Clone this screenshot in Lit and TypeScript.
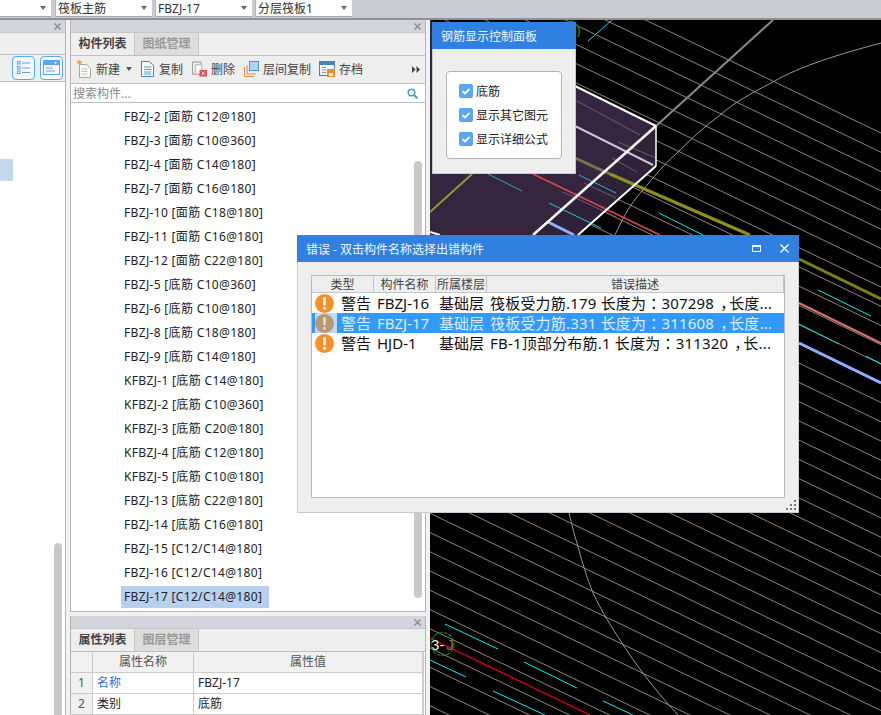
import { LitElement, html, css, svg } from "lit";
import { customElement } from "lit/decorators.js";

const rows = [
  "FBZJ-2 [面筋 C12@180]", "FBZJ-3 [面筋 C10@360]", "FBZJ-4 [面筋 C14@180]", "FBZJ-7 [面筋 C16@180]",
  "FBZJ-10 [面筋 C18@180]", "FBZJ-11 [面筋 C16@180]", "FBZJ-12 [面筋 C22@180]", "FBZJ-5 [底筋 C10@360]",
  "FBZJ-6 [底筋 C10@180]", "FBZJ-8 [底筋 C18@180]", "FBZJ-9 [底筋 C14@180]", "KFBZJ-1 [底筋 C14@180]",
  "KFBZJ-2 [底筋 C10@360]", "KFBZJ-3 [底筋 C20@180]", "KFBZJ-4 [底筋 C12@180]", "KFBZJ-5 [底筋 C10@180]",
  "FBZJ-13 [底筋 C22@180]", "FBZJ-14 [底筋 C16@180]", "FBZJ-15 [C12/C14@180]", "FBZJ-16 [C12/C14@180]",
  "FBZJ-17 [C12/C14@180]",
];

const errors = [
  { name: "FBZJ-16", desc: "筏板受力筋.179 长度为：307298，长度..." },
  { name: "FBZJ-17", desc: "筏板受力筋.331 长度为：311608，长度...", selected: true },
  { name: "HJD-1", desc: "FB-1顶部分布筋.1 长度为：311320，长..." },
];

// [x1, y1, x2, y2, colour, width]
const segments: [number, number, number, number, string, number][] = [
  [773, 20, 656, 126, "#8a8a8a", 2],
  [575, 126, 653, 165, "#c9bfd6", 2],
  [618, 142, 656, 158, "#6d5f70", 1],
  [612, 158, 637, 172, "#6d5f70", 1],
  [563, 192, 616, 217, "#6d5f70", 1],
  [584, 183, 616, 198, "#6d5f70", 1],
  [575, 100, 640, 135, "#6d5f70", 1],
  [575, 158, 610, 174, "#7d7450", 3],
  [610, 174, 750, 235, "#8f8f1a", 3],
  [799, 259, 881, 299, "#7f7f10", 3],
  [430, 212, 472, 174, "#9b9634", 2],
  [488, 174, 522, 191, "#2aa6b8", 1],
  [579, 175, 616, 193, "#1fb8c8", 1],
  [549, 203, 601, 228, "#1fc8d0", 1],
  [588, 41, 612, 20, "#16e0e0", 1],
  [659, 213, 703, 235, "#00f0f0", 1],
  [818, 290, 871, 316, "#00f0f0", 1],
  [799, 324, 839, 344, "#00e0e0", 1],
  [866, 356, 881, 364, "#00f0f0", 1],
  [445, 624, 498, 649, "#00f0f0", 1],
  [430, 660, 466, 677, "#00f0f0", 1],
  [524, 662, 577, 688, "#00f0f0", 1],
  [493, 691, 545, 715, "#00f0f0", 1],
  [603, 701, 633, 715, "#00f0f0", 1],
  [533, 174, 660, 235, "#d94848", 1.5],
  [799, 303, 881, 343, "#e07070", 2],
  [430, 638, 590, 715, "#e00000", 1.3],
  [548, 222, 574, 235, "#8fb4ff", 3],
  [799, 343, 881, 383, "#8ab0ff", 3],
  [575, 86, 656, 126, "#ffffff", 2],
  [656, 126, 656, 166, "#ffffff", 1.5],
  [656, 126, 533, 235, "#ffffff", 2.5],
  [656, 166, 578, 235, "#ffffff", 2],
  [430, 232, 440, 235, "#ffffff", 2],
];

function hatch() {
  const lines = [];
  for (let k = -30; k < 32; k++) {
    const y0 = 513.3 + (k - 1) * 19.25;
    lines.push(svg`<line x1="430" y1=${y0} x2="881" y2=${y0 + 0.48 * 451} stroke="#8f847a" stroke-width="1"></line>`);
  }
  return lines;
}

const closeIcon = html`<svg class="x" width="7" height="7" viewBox="0 0 7 7"><path d="M.5.5l6 6M6.500.5l-6 6" stroke="#8b8e94" stroke-width="1.500"/></svg>`;

const warnIcon = (selected?: boolean) => html`<svg class="warn" width="19" height="19" viewBox="0 0 19 19">
  <circle cx="9.500" cy="9.500" r="9.500" fill=${selected ? "#b9976f" : "#f7902a"}/>
  <path d="M8 3.500h3l-.5 8h-2zM8.200 13h2.600v2.600H8.200z" fill=${selected ? "#e8dccb" : "#fff"}/>
</svg>`;

// the full-width colon and comma sit centred in the original
const punctuated = (text: string) =>
  text.split(/([：，])/).map((part) => {
    if (part === "：") return html`<span class="colon">${part}</span>`;
    if (part === "，") return html`<span class="comma">${part}</span>`;
    return part;
  });

@customElement("app-root")
export class AppRoot extends LitElement {
  static styles = css`
    :host {
      display: block;
      width: 881px;
      height: 715px;
      position: relative;
      overflow: hidden;
      background: #f2f2f2;
      font-family: "Noto Sans", "Noto Sans CJK SC", sans-serif;
      font-size: 12px;
      color: #222;
    }
    .top {
      height: 20px;
      box-sizing: border-box;
      background: #c9ccd1;
      border-bottom: 2px solid #8f9195;
      display: flex;
      gap: 3px;
    }
    .combo {
      width: 97px;
      height: 17px;
      box-sizing: border-box;
      background: #fff;
      padding: 0 0 0 2px;
      display: flex;
      align-items: center;
      justify-content: space-between;
      line-height: 15px;
      color: #333;
      border-left: 1px solid #b5b7bb;
      border-bottom: 1px solid #a5a7ab;
    }
    .combo.first { width: 51px; margin-right: 1px; border-left: none; }
    .caret {
      width: 0;
      height: 0;
      margin-right: 5px;
      border-left: 3.500px solid transparent;
      border-right: 3.500px solid transparent;
      border-top: 4px solid #666;
    }
    .main { display: flex; height: 695px; }
    .side {
      width: 66px;
      box-sizing: border-box;
      border-right: 1px solid #b4b4b4;
      display: flex;
      flex-direction: column;
      background: #fff;
      position: relative;
    }
    .mid {
      width: 356px;
      margin: 0 4px;
      display: flex;
      flex-direction: column;
      gap: 4px;
    }
    .pane {
      display: flex;
      flex-direction: column;
      box-sizing: border-box;
      border: 1px solid #b4b4b4;
      border-top: none;
      background: #fff;
    }
    .pane.list { height: 592px; }
    .pane.props { height: 99px; border-bottom: none; }
    .head {
      height: 12px;
      flex: none;
      background: #d3d5da;
      display: flex;
      justify-content: flex-end;
      align-items: center;
      padding-right: 4px;
    }
    .tabs {
      height: 22px;
      flex: none;
      display: flex;
      background: #eee;
      border-top: 1px solid #c8c8c8;
      border-bottom: 1px solid #c0c0c0;
      box-sizing: content-box;
    }
    .tab {
      width: 64px;
      box-sizing: border-box;
      text-align: center;
      line-height: 22px;
      font-weight: 700;
      color: #444;
      border-right: 1px solid #c8c8c8;
    }
    .tab.off { color: #999; background: #ddd; border-right: 1px solid #c8c8c8; }
    .tools {
      height: 26px;
      padding-bottom: 1px;
      flex: none;
      background: #eee;
      border-bottom: 1px solid #c0c0c0;
      display: flex;
      align-items: center;
      padding-left: 6px;
      color: #444;
    }
    .tool { display: flex; align-items: center; gap: 4px; margin-right: 9px; }
    .tool:nth-child(4) { margin-right: 8px; }
    .tool .caret { margin: 0 0 0 2px; border-top-color: #555; border-left-width: 3px; border-right-width: 3px; }
    .more { margin-left: auto; margin-right: 5px; }
    .search {
      height: 18px;
      flex: none;
      border-bottom: 1px solid #c0c0c0;
      display: flex;
      align-items: center;
      justify-content: space-between;
      padding: 0 7px 0 2px;
      color: #8a8a8a;
    }
    .rows {
      flex: 1;
      padding-top: 2px;
      position: relative;
    }
    .row {
      height: 24px;
      display: flex;
      align-items: center;
      padding-left: 50px;
    }
    .row span {
      padding: 0 3px;
      height: 22px;
      line-height: 22px;
      min-width: 142px;
      color: #222;
      letter-spacing: 0.33px;
    }
    .row.on span { background: #b7d0f0; }
    .thumb {
      position: absolute;
      left: 343px;
      top: 58px;
      width: 8px;
      height: 437px;
      border-radius: 4px;
      background: #c9c9c9;
    }
    .side .tools { height: 25px; justify-content: flex-start; padding-left: 12px; gap: 5px; }
    .side .tabs { height: 21px; }
    .side-btn {
      width: 23px;
      height: 24px;
      box-sizing: border-box;
      border: 1px solid #5aa5f5;
      border-radius: 4px;
      background: #f4f9ff;
      display: flex;
      align-items: center;
      justify-content: center;
    }
    .side-sel { height: 22px; width: 13px; background: #c5d8f0; margin-top: 77px; }
    .side-thumb {
      position: absolute;
      left: 54px;
      top: 523px;
      width: 8px;
      height: 172px;
      border-radius: 4px 4px 0 0;
      background: #c9c9c9;
    }
    .grid {
      display: grid;
      grid-template-columns: 22px 101px 229px;
      grid-auto-rows: 21px;
      line-height: 20px;
      border-right: 1px solid #ccc;
      width: 352px;
      box-sizing: content-box;
    }
    .grid > div {
      box-sizing: border-box;
      border-right: 1px solid #ccc;
      border-bottom: 1px solid #ccc;
      padding-left: 4px;
      overflow: hidden;
      white-space: nowrap;
    }
    .grid .hd { background: #f0f0f0; text-align: center; padding: 0; color: #555; }
    .grid .num { background: #f0f0f0; text-align: center; padding: 0; color: #555; }
    .grid .link { color: #2f6fe0; }
    .canvas { flex: 1; background: #000; }
    .canvas svg { display: block; }
    .window {
      position: absolute;
      box-sizing: border-box;
      background: #eee;
      border: 1px solid #c4cad6;
      border-top: none;
      display: flex;
      flex-direction: column;
    }
    .bar {
      flex: none;
      margin: 0 -1px;
      background: #2f80e0;
      color: #f0f6ff;
      display: flex;
      align-items: center;
    }
    .panel { left: 432px; top: 22px; width: 144px; height: 152px; }
    .panel .bar { height: 27px; padding-left: 9px; }
    .box {
      margin: 22px 13px 0 13px;
      height: 88px;
      box-sizing: border-box;
      background: #fff;
      border: 1px solid #b4b4b4;
      border-radius: 4px;
      padding: 12px 0 0 12px;
      display: flex;
      flex-direction: column;
      gap: 10px;
    }
    .check { display: flex; align-items: center; gap: 3px; height: 14px; color: #222; }
    .check svg { flex: none; }
    .dialog { left: 297px; top: 235px; width: 502px; height: 278px; }
    .dialog .bar { height: 27px; padding: 0 10px 0 9px; justify-content: space-between; }
    .bar-btns { display: flex; align-items: center; gap: 19px; }
    .table {
      margin: 13px 13px 0 13px;
      height: 223px;
      box-sizing: border-box;
      background: #fff;
      border: 1px solid #bbb;
    }
    .t-head {
      height: 17px;
      box-sizing: border-box;
      display: grid;
      grid-template-columns: 62px 62px 51px 1fr;
      background: #eee;
      border-bottom: 1px solid #c4c4c4;
      line-height: 17px;
      color: #444;
      text-align: center;
    }
    .t-head div { border-right: 1px solid #c4c4c4; }
    .t-row {
      height: 20px;
      display: grid;
      grid-template-columns: 25px 36px 62px 51px 1fr;
      align-items: center;
      font-size: 15px;
      line-height: 20px;
      color: #111;
      white-space: nowrap;
    }
    .t-row > div { padding-left: 4px; overflow: hidden; }
    .t-row > .ic { padding: 0 0 0 3px; height: 20px; display: flex; align-items: center; box-sizing: border-box; }
    .t-row > .desc { letter-spacing: 0.2px; }
    .colon { font-family: "Noto Sans CJK TC", sans-serif; }
    .comma { padding-left: 6px; letter-spacing: -6px; }
    .t-row.on { background: #3399ff; color: #dbeeff; }
    .t-row.on > .ic { background: #bbdcf8; border-left: 3px solid #3399ff; padding-left: 0; }
    .grip {
      position: absolute;
      right: 1px;
      bottom: 1px;
      width: 11px;
      height: 11px;
    }
  `;

  private listIcon = html`<svg width="15" height="15" viewBox="0 0 15 15" fill="none" stroke="#5aa5f5"><rect x="1.500" y="1.500" width="2.500" height="2.500"/><rect x="1.500" y="6.500" width="2.500" height="2.500"/><rect x="1.500" y="11" width="2.500" height="2.500"/><path d="M6 3h8M6 8h8M6 12.500h8" stroke="#6a9fd8"/></svg>`;
  private winIcon = html`<svg width="17" height="15" viewBox="0 0 17 15" fill="none"><rect x=".5" y=".5" width="16" height="14" stroke="#5aa5f5"/><rect x="1" y="1" width="15" height="4" fill="#5aa5f5"/><path d="M3 8h7M3 11h9" stroke="#6a9fd8"/><path d="M11 2h3l-1.500 2z" fill="#fff"/></svg>`;

  private newIcon = html`<svg width="15" height="18" viewBox="0 0 15 18"><path d="M2.500 4.500h7l4 4v9h-11z" fill="#fbfbf5" stroke="#a8a8a0"/><path d="M4.500 9h6M4.500 11.500h6M4.500 14h6" stroke="#c0c0b8"/><path d="M0 1h2V0h1v1h2v1H3.500v1h1v1h-1V3h-1v1h-1V3H0z" fill="#f39a2d"/><rect x="1" y="1" width="3" height="3" fill="#f5a640"/></svg>`;
  private copyIcon = html`<svg width="14" height="16" viewBox="0 0 14 16" fill="none"><path d="M.5 .5h8l4 4v11H.5z" fill="#f6fafe" stroke="#3c86cc"/><path d="M3 6h7M3 8.500h7M3 11h7M3 13h7" stroke="#5b9bd5"/></svg>`;
  private delIcon = html`<svg width="15" height="16" viewBox="0 0 16 16" fill="none"><path d="M.5 .5h9v13H.5z" fill="#f2f2f2" stroke="#8f9496"/><path d="M3.500 3.500h7v10h-7z" fill="#fff" stroke="#a9adaf"/><rect x="8" y="9" width="8" height="7" fill="#e0484c"/><path d="M10 10.500l4 4M14 10.500l-4 4" stroke="#fff"/></svg>`;
  private layerIcon = html`<svg width="15" height="16" viewBox="0 0 15 16" fill="none"><path d="M.5 6v9.500H10M3 4v9h9" stroke="#e08a4c"/><rect x="5.500" y=".5" width="9" height="9" fill="#b5d2f5" stroke="#4d90d5"/></svg>`;
  private saveIcon = html`<svg width="16" height="16" viewBox="0 0 16 16" fill="none"><rect x=".5" y=".5" width="15" height="14" fill="#f4f7fb" stroke="#3c86cc"/><rect x="1" y="1" width="14" height="3" fill="#3c86cc"/><path d="M3 6.500h4M3 9h4M3 11.500h4" stroke="#8c9aa8"/><rect x="8" y="8" width="8" height="8" fill="#ef8b2c"/><rect x="10" y="12" width="4" height="3" fill="#fff"/></svg>`;
  private searchIcon = html`<svg width="11" height="11" viewBox="0 0 11 11" fill="none"><circle cx="4.500" cy="4.500" r="3.300" stroke="#4a9ccc" stroke-width="1.600"/><path d="M7 7l3.300 3.300" stroke="#4a9ccc" stroke-width="2"/></svg>`;
  private moreIcon = html`<svg class="more" width="8" height="7" viewBox="0 0 8 7" fill="#444"><path d="M0 0l3.500 3.500L0 7zM4.500 0L8 3.500 4.500 7z"/></svg>`;
  private checkIcon = html`<svg width="14" height="14" viewBox="0 0 14 14"><rect width="14" height="14" rx="2" fill="#5aa5f5"/><path d="M3.500 7l2.500 2.500 4.500-4.500" fill="none" stroke="#fff" stroke-width="1.800"/></svg>`;

  private scene() {
    return html`<svg width="451" height="695" viewBox="430 20 451 695">
      ${hatch()}
      ${svg`<polygon points="430,20 575,86 656,126 656,166 578,235 430,235" fill="#35253f"></polygon>`}
      ${svg`<polygon points="656,126 656,166 578,235 533,235" fill="#2e2138"></polygon>`}
      ${svg`<path d="M881 43C840 54 800 66 773 82C750 94 735 102 720 115C705 126 690 140 677 153C660 168 650 182 637 197C628 208 622 220 615 235L569 513C572 525 574 534 577 543C582 562 587 578 593 593C602 612 612 628 622 643C629 654 636 664 643 673C654 688 666 702 678 715" fill="none" stroke="#9a9a9a" stroke-width="1"></path>`}
      ${segments.map(([x1, y1, x2, y2, c, w]) => svg`<line x1=${x1} y1=${y1} x2=${x2} y2=${y2} stroke=${c} stroke-width=${w}></line>`)}
      ${svg`<path d="M570 21a11 11 0 0 1 8 16" fill="none" stroke="#0a8a0a" stroke-width="1.500"></path>`}
      ${svg`<text x="431" y="650" fill="#eee" font-size="15" font-family="Liberation Sans, sans-serif">3-<tspan fill="#777" dx="2">J</tspan></text>`}
      ${svg`<circle cx="442.500" cy="644" r="11.500" fill="none" stroke="#128012" stroke-width="1.200" stroke-dasharray="4 1"></circle>`}
    </svg>`;
  }

  render() {
    return html`
      <div class="top">
        <div class="combo first"><i></i><i class="caret"></i></div>
        <div class="combo">筏板主筋<i class="caret"></i></div>
        <div class="combo">FBZJ-17<i class="caret"></i></div>
        <div class="combo">分层筏板1<i class="caret"></i></div>
      </div>
      <div class="main">
        <div class="side">
          <div class="head">${closeIcon}</div>
          <div class="tabs"></div>
          <div class="tools">
            <div class="side-btn">${this.listIcon}</div>
            <div class="side-btn">${this.winIcon}</div>
          </div>
          <div class="side-sel"></div>
          <div class="side-thumb"></div>
        </div>
        <div class="mid">
          <div class="pane list">
            <div class="head">${closeIcon}</div>
            <div class="tabs"><div class="tab">构件列表</div><div class="tab off">图纸管理</div></div>
            <div class="tools">
              <div class="tool">${this.newIcon}新建<i class="caret"></i></div>
              <div class="tool">${this.copyIcon}复制</div>
              <div class="tool">${this.delIcon}删除</div>
              <div class="tool">${this.layerIcon}层间复制</div>
              <div class="tool">${this.saveIcon}存档</div>
              ${this.moreIcon}
            </div>
            <div class="search">搜索构件...${this.searchIcon}</div>
            <div class="rows">
              ${rows.map((r, i) => html`<div class="row ${i === rows.length - 1 ? "on" : ""}"><span>${r}</span></div>`)}
              <div class="thumb"></div>
            </div>
          </div>
          <div class="pane props">
            <div class="head">${closeIcon}</div>
            <div class="tabs"><div class="tab">属性列表</div><div class="tab off">图层管理</div></div>
            <div class="grid">
              <div class="hd"></div><div class="hd">属性名称</div><div class="hd">属性值</div>
              <div class="num">1</div><div class="link">名称</div><div>FBZJ-17</div>
              <div class="num">2</div><div>类别</div><div>底筋</div>
            </div>
          </div>
        </div>
        <div class="canvas">${this.scene()}</div>
      </div>

      <div class="window panel">
        <div class="bar">钢筋显示控制面板</div>
        <div class="box">
          <div class="check">${this.checkIcon}底筋</div>
          <div class="check">${this.checkIcon}显示其它图元</div>
          <div class="check">${this.checkIcon}显示详细公式</div>
        </div>
      </div>

      <div class="window dialog">
        <div class="bar">
          <span>错误 - 双击构件名称选择出错构件</span>
          <div class="bar-btns">
            <svg width="9" height="7" viewBox="0 0 9 7" fill="none"><rect x=".5" y=".5" width="8" height="6" stroke="#fff"/><path d="M0 1h9" stroke="#fff" stroke-width="2"/></svg>
            <svg width="9" height="9" viewBox="0 0 9 9"><path d="M.5.5l8 8M8.500.5l-8 8" stroke="#fff" stroke-width="1.400"/></svg>
          </div>
        </div>
        <div class="table">
          <div class="t-head"><div>类型</div><div>构件名称</div><div>所属楼层</div><div>错误描述</div></div>
          ${errors.map((e) => html`<div class="t-row ${e.selected ? "on" : ""}">
            <div class="ic">${warnIcon(e.selected)}</div>
            <div>警告</div><div>${e.name}</div><div>基础层</div><div class="desc">${punctuated(e.desc)}</div>
          </div>`)}
        </div>
        <svg class="grip" viewBox="0 0 11 11" fill="#777"><rect x="8" y="0" width="2" height="2"/><rect x="4" y="4" width="2" height="2"/><rect x="8" y="4" width="2" height="2"/><rect x="0" y="8" width="2" height="2"/><rect x="4" y="8" width="2" height="2"/><rect x="8" y="8" width="2" height="2"/></svg>
      </div>
    `;
  }
}
